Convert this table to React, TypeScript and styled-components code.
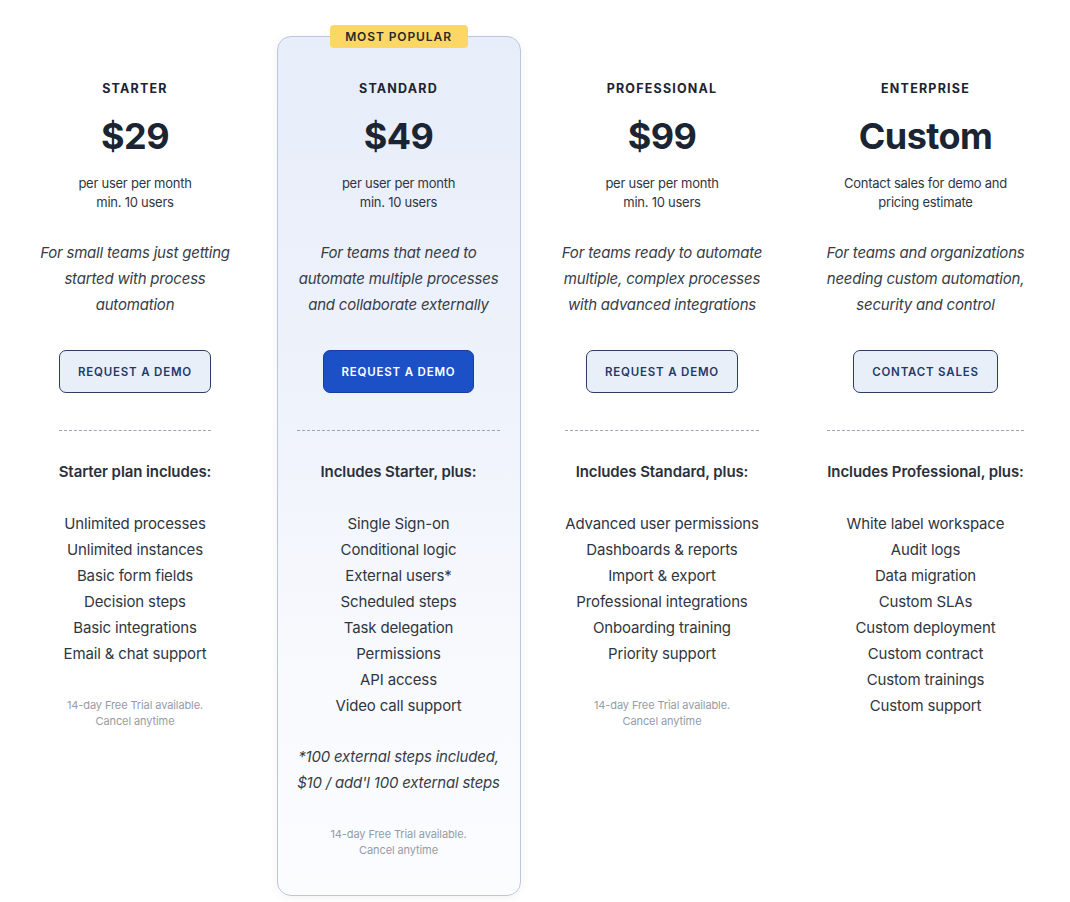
import React from "react";
import styled, { createGlobalStyle } from "styled-components";

type Plan = {
  name: string;
  price: string;
  sub: string[];
  description: string;
  cta: string;
  heading: string;
  features: string[];
  footnote?: string[];
  trial: boolean;
  featured?: boolean;
};

const plans: Plan[] = [
  {
    name: "Starter",
    price: "$29",
    sub: ["per user per month", "min. 10 users"],
    description: "For small teams just getting started with process automation",
    cta: "Request a demo",
    heading: "Starter plan includes:",
    features: [
      "Unlimited processes",
      "Unlimited instances",
      "Basic form fields",
      "Decision steps",
      "Basic integrations",
      "Email & chat support",
    ],
    trial: true,
  },
  {
    name: "Standard",
    price: "$49",
    sub: ["per user per month", "min. 10 users"],
    description:
      "For teams that need to automate multiple processes and collaborate externally",
    cta: "Request a demo",
    heading: "Includes Starter, plus:",
    features: [
      "Single Sign-on",
      "Conditional logic",
      "External users*",
      "Scheduled steps",
      "Task delegation",
      "Permissions",
      "API access",
      "Video call support",
    ],
    footnote: ["*100 external steps included,", "$10 / add'l 100 external steps"],
    trial: true,
    featured: true,
  },
  {
    name: "Professional",
    price: "$99",
    sub: ["per user per month", "min. 10 users"],
    description:
      "For teams ready to automate multiple, complex processes with advanced integrations",
    cta: "Request a demo",
    heading: "Includes Standard, plus:",
    features: [
      "Advanced user permissions",
      "Dashboards & reports",
      "Import & export",
      "Professional integrations",
      "Onboarding training",
      "Priority support",
    ],
    trial: true,
  },
  {
    name: "Enterprise",
    price: "Custom",
    sub: ["Contact sales for demo and", "pricing estimate"],
    description:
      "For teams and organizations needing custom automation, security and control",
    cta: "Contact sales",
    heading: "Includes Professional, plus:",
    features: [
      "White label workspace",
      "Audit logs",
      "Data migration",
      "Custom SLAs",
      "Custom deployment",
      "Custom contract",
      "Custom trainings",
      "Custom support",
    ],
    trial: false,
  },
];

function App() {
  return (
    <>
      <GlobalStyle />
      <Page>
        {plans.map((plan) => (
          <Column key={plan.name} $featured={!!plan.featured}>
            {plan.featured ? <Badge>Most popular</Badge> : null}
            <PlanName>{plan.name}</PlanName>
            <Price>{plan.price}</Price>
            <Sub>
              {plan.sub.map((line) => (
                <div key={line}>{line}</div>
              ))}
            </Sub>
            <Description>{plan.description}</Description>
            <Cta $primary={!!plan.featured}>{plan.cta}</Cta>
            <Includes>
              <IncludesHeading>{plan.heading}</IncludesHeading>
              <FeatureList>
                {plan.features.map((f) => (
                  <li key={f}>{f}</li>
                ))}
              </FeatureList>
              {plan.footnote ? (
                <Footnote>
                  {plan.footnote.map((line) => (
                    <div key={line}>{line}</div>
                  ))}
                </Footnote>
              ) : null}
              {plan.trial ? (
                <Trial>
                  14-day Free Trial available.
                  <br />
                  Cancel anytime
                </Trial>
              ) : null}
            </Includes>
          </Column>
        ))}
      </Page>
    </>
  );
}

const GlobalStyle = createGlobalStyle`
  body {
    margin: 0;
    background: #ffffff;
    font-family: Inter, "Noto Sans", sans-serif;
    color: #2a313c;
  }
`;

const Page = styled.main`
  display: grid;
  grid-template-columns: repeat(4, 244px);
  column-gap: 19.5px;
  padding: 36px 0 6px 13px;
  align-items: start;
`;

const Column = styled.section<{ $featured: boolean }>`
  position: relative;
  display: flex;
  flex-direction: column;
  align-items: center;
  text-align: center;
  padding: 44px 0 37px;
  border: 1px solid ${(p) => (p.$featured ? "#bcc7dd" : "transparent")};
  border-radius: 14px;
  background: ${(p) =>
    p.$featured
      ? "linear-gradient(180deg, #e7edf9 0%, #eef2fb 40%, #f8fafd 75%, #fbfcfe 100%)"
      : "transparent"};
  box-shadow: ${(p) => (p.$featured ? "0 2px 8px rgba(30, 50, 90, 0.06)" : "none")};
`;

const Badge = styled.div`
  position: absolute;
  top: -12px;
  left: 50%;
  transform: translateX(-50%);
  width: 138px;
  height: 23px;
  line-height: 23px;
  background: #fcd766;
  border-radius: 4px;
  font-size: 12px;
  font-weight: 600;
  letter-spacing: 0.9px;
  text-transform: uppercase;
  color: #2a2a2a;
`;

const PlanName = styled.h2`
  margin: 0;
  font-size: 12.5px;
  line-height: 16px;
  font-weight: 700;
  letter-spacing: 1.2px;
  text-transform: uppercase;
  color: #1c2430;
`;

const Price = styled.div`
  margin-top: 17px;
  font-size: 36px;
  line-height: 44px;
  font-weight: 700;
  letter-spacing: -0.6px;
  color: #1b2433;
`;

const Sub = styled.div`
  margin-top: 16px;
  font-size: 13px;
  line-height: 19px;
  letter-spacing: -0.25px;
  color: #2f3642;
`;

const Description = styled.p`
  margin: 28px 0 0;
  max-width: 206px;
  font-size: 15px;
  line-height: 26px;
  letter-spacing: -0.2px;
  font-style: italic;
  color: #363d48;
`;

const Cta = styled.button<{ $primary: boolean }>`
  margin-top: 32px;
  height: 43px;
  padding: 0 18px;
  border-radius: 7px;
  border: 1px solid ${(p) => (p.$primary ? "#143f9e" : "#2c3f63")};
  background: ${(p) => (p.$primary ? "#1b50c6" : "#e9eff9")};
  color: ${(p) => (p.$primary ? "#ffffff" : "#1f3a6a")};
  font-family: inherit;
  font-size: 11.5px;
  font-weight: 600;
  letter-spacing: 0.8px;
  text-transform: uppercase;
  cursor: pointer;
`;

const Includes = styled.div`
  margin-top: 37px;
  display: flex;
  flex-direction: column;
  align-items: center;
  border-top: 1px dashed #9ea5af;
  padding-top: 30px;
`;

const IncludesHeading = styled.h3`
  margin: 0;
  font-size: 15px;
  line-height: 22px;
  font-weight: 600;
  letter-spacing: -0.1px;
  white-space: nowrap;
  color: #2a303a;
`;

const FeatureList = styled.ul`
  margin: 28px 0 0;
  padding: 0;
  list-style: none;
  font-size: 15px;
  line-height: 26px;
  letter-spacing: -0.15px;
  color: #2f3641;
  white-space: nowrap;
`;

const Footnote = styled.div`
  margin-top: 25px;
  font-size: 15px;
  line-height: 26px;
  letter-spacing: -0.2px;
  font-style: italic;
  color: #363d48;
  white-space: nowrap;
`;

const Trial = styled.p`
  margin: 30px 0 0;
  font-size: 11px;
  line-height: 16px;
  letter-spacing: -0.1px;
  color: #959ca6;
`;

export default App;
